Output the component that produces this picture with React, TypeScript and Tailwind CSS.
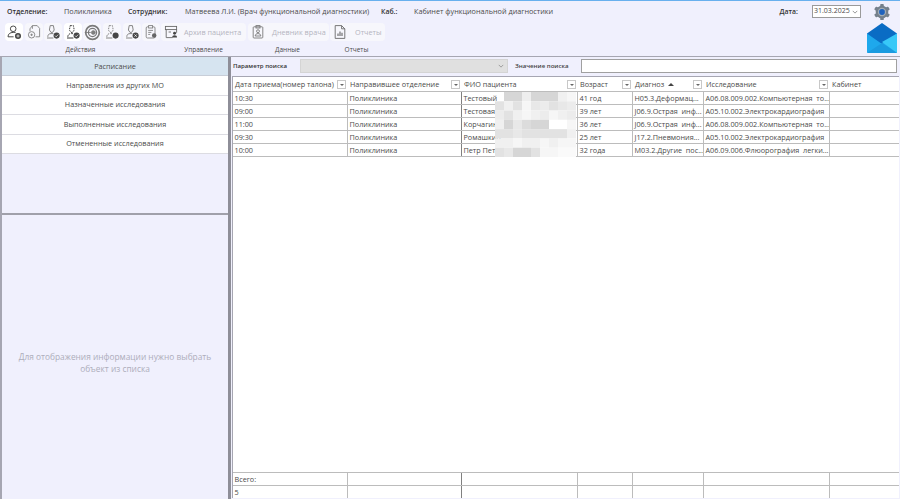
const font = "font-['Open_Sans','Noto_Sans',sans-serif]";

const columns = [
  { title: "Дата приема(номер талона)", width: "w-[115px]", filter: true },
  { title: "Направившее отделение", width: "w-[114px]", filter: true },
  { title: "ФИО пациента", width: "w-[116px]", filter: true },
  { title: "Возраст", width: "w-[55px]", filter: true },
  { title: "Диагноз", width: "w-[71px]", filter: true, sort: true },
  { title: "Исследование", width: "w-[126px]", filter: true },
  { title: "Кабинет", width: "flex-1", filter: false },
];

const rows = [
  ["10:30", "Поликлиника", "Тестовый", "41 год", "H05.3.Деформац...", "A06.08.009.002.Компьютерная  то...", ""],
  ["09:00", "Поликлиника", "Тестовая", "39 лет", "J06.9.Острая  инф...", "A05.10.002.Электрокардиография", ""],
  ["11:00", "Поликлиника", "Корчагин", "36 лет", "J06.9.Острая  инф...", "A06.08.009.002.Компьютерная  то...", ""],
  ["09:30", "Поликлиника", "Ромашкин", "25 лет", "J17.2.Пневмония...", "A05.10.002.Электрокардиография", ""],
  ["10:00", "Поликлиника", "Петр Петр", "32 года", "M03.2.Другие  пос...", "A06.09.006.Флюорография  легки...", ""],
];

const tabs = ["Направления из других МО", "Назначенные исследования", "Выполненные исследования", "Отмененные исследования"];

// мозаика поверх ФИО
const mosaic = [
  [0, 214, 214, 238, 214, 214, 214, 240, 246],
  [226, 240, 226, 246, 232, 236, 226, 232, 236],
  [236, 226, 240, 246, 240, 236, 246, 240, 236],
  [240, 214, 232, 220, 214, 214, 255, 255, 246],
  [226, 226, 232, 226, 226, 226, 226, 226, 240],
  [240, 240, 246, 240, 240, 246, 240, 246, 246],
  [226, 232, 214, 214, 226, 246, 246, 250, 250],
];

const Badge = ({ cx = 15, cy = 15, kind = "dot" }: { cx?: number; cy?: number; kind?: string }) => (
  <g stroke="none">
    <circle cx={cx} cy={cy} r="3.8" fill="#454545" />
    {kind === "check" && <path d={`M${cx - 2} ${cy}l1.5 1.5 2.5-2.8`} stroke="#fff" strokeWidth="0.9" fill="none" />}
    {kind === "plus" && <path d={`M${cx - 2} ${cy}h4M${cx} ${cy - 2}v4`} stroke="#fff" strokeWidth="0.9" />}
    {kind === "x" && <path d={`M${cx - 1.5} ${cy - 1.5}l3 3m0-3l-3 3`} stroke="#fff" strokeWidth="0.9" />}
  </g>
);

const Scope = ({ kind, dashed, dark }: { kind: string; dashed?: boolean; dark?: boolean }) => (
  <svg viewBox="0 0 20 20" className="w-[16px] h-[16px]" fill="none" stroke={dark ? "#333" : "#808080"} strokeWidth="1.2">
    <path d="M6.500 2h4l1 5.500-2 3H7.500L5.500 7.500z" strokeDasharray={dashed ? "2 1.3" : undefined} />
    <path d="M3.500 16c0-2.500 1.500-4 4-4h3" strokeDasharray={dashed ? "2 1.3" : undefined} />
    <path d="M2.500 17.500h8" />
    <Badge kind={kind} cx={14.5} cy={14.5} />
  </svg>
);

const ToolButton = ({ active, children }: { active?: boolean; children: React.ReactNode }) => (
  <div className={`w-[18px] h-[18px] rounded-[4px] flex items-center justify-center ${active ? "bg-white" : "bg-[#f7f7fc]"}`}>
    {children}
  </div>
);

const FilterButton = () => (
  <span className="ml-auto mr-[2px] w-[9px] h-[9px] shrink-0 border border-[#c8c8c8] bg-white flex items-center justify-center">
    <span className="w-0 h-0 border-l-[2px] border-r-[2px] border-t-[2px] border-l-transparent border-r-transparent border-t-[#666]" />
  </span>
);

export default function App() {
  return (
    <div className={`${font} w-[900px] h-[499px] overflow-hidden bg-[#f0f0fd] text-[#4a4a4a] text-[7.25px] flex flex-col border-t-[1px] border-[#68b0ee] relative`}>
      {/* верхняя строка */}
      <div className="h-[21px] shrink-0 flex items-center">
        <span className="ml-[7px] w-[57px] pt-[1px] font-semibold text-[6.9px] text-[#333]">Отделение:</span>
        <span className="w-[64px]">Поликлиника</span>
        <span className="w-[57px] pt-[1px] font-semibold text-[6.9px] text-[#333]">Сотрудник:</span>
        <span className="w-[196px]">Матвеева Л.И. (Врач функциональной диагностики)</span>
        <span className="w-[33px] pt-[1px] font-semibold text-[6.9px] text-[#333]">Каб.:</span>
        <span>Кабинет функциональной диагностики</span>
        <span className="ml-auto pt-[1px] font-semibold text-[6.9px] text-[#333]">Дата:</span>
        <div className="ml-[14px] w-[49px] h-[13px] bg-white border border-[#9a9a9a] flex items-center pl-[1px] text-[7px]">
          31.03.2025
          <svg viewBox="0 0 8 8" className="ml-auto mr-[2px] w-[6px] h-[6px]" fill="none" stroke="#777" strokeWidth="1">
            <path d="M1 2.5l3 3 3-3" />
          </svg>
        </div>
        <svg viewBox="0 0 20 20" className="ml-[12px] mr-[9px] w-[18px] h-[18px]">
          <g fill="#75808c">
            <circle cx="10" cy="10" r="7" />
            <rect x="8" y="1" width="4" height="18" rx="1" />
            <rect x="8" y="1" width="4" height="18" rx="1" transform="rotate(60 10 10)" />
            <rect x="8" y="1" width="4" height="18" rx="1" transform="rotate(120 10 10)" />
          </g>
          <circle cx="10" cy="10" r="4.600" fill="#a4adb6" />
          <circle cx="10" cy="10" r="3.200" fill="#1f62bd" />
        </svg>
      </div>

      {/* панель инструментов */}
      <div className="h-[20px] shrink-0 flex items-center relative">
        <div className="ml-[5px] w-[156px] flex gap-[1.600px]">
          <ToolButton active>
            <svg viewBox="0 0 20 20" className="w-[16px] h-[16px]" fill="none" stroke="#444" strokeWidth="1.200">
              <circle cx="9" cy="6" r="3.500" />
              <path d="M2.500 16c0-3.500 2.500-5.500 6.500-5.500h3" />
              <path d="M2.500 16h7" />
              <Badge kind="plus" cx={15} cy={15} />
            </svg>
          </ToolButton>
          <ToolButton>
            <svg viewBox="0 0 20 20" className="w-[16px] h-[16px]" fill="none" stroke="#808080" strokeWidth="1.100">
              <path d="M8 2h6l3 3.500V16h-5M8 2v4M8 2L5 6v3" />
              <circle cx="7" cy="13.500" r="4" />
              <path d="M5.500 13.500h3M7 12v3" />
            </svg>
          </ToolButton>
          <ToolButton><Scope kind="check" /></ToolButton>
          <ToolButton active><Scope kind="check" dashed dark /></ToolButton>
          <ToolButton>
            <svg viewBox="0 0 20 20" className="w-[17px] h-[17px]" fill="none" stroke="#7a7a7a">
              <circle cx="10" cy="10" r="8" strokeWidth="2" />
              <circle cx="10" cy="10" r="4.800" strokeWidth="1.500" />
              <circle cx="11" cy="10" r="2.200" fill="#808080" />
              <path d="M1 10h7" strokeWidth="1" />
            </svg>
          </ToolButton>
          <ToolButton><Scope kind="dot" dashed /></ToolButton>
          <ToolButton><Scope kind="x" /></ToolButton>
          <ToolButton>
            <svg viewBox="0 0 20 20" className="w-[16px] h-[16px]" fill="none" stroke="#808080" strokeWidth="1.100">
              <rect x="4" y="3.500" width="11" height="14" rx="1.500" />
              <rect x="7" y="2" width="5" height="3" fill="#f7f7fc" />
              <path d="M6.500 8h6M6.500 10.500h4M6.500 13h2.500" />
              <circle cx="14" cy="14.500" r="2.800" fill="#666" stroke="none" />
            </svg>
          </ToolButton>
        </div>
        <div className="w-[85px] h-[18px] rounded-[4px] bg-[#f7f7fc] flex items-center">
          <svg viewBox="0 0 20 20" className="ml-[2px] w-[16px] h-[16px]" fill="none" stroke="#666" strokeWidth="1.100">
            <rect x="3" y="3" width="14" height="4" />
            <path d="M4 7v10h8M17 7v4M7 10h3" />
            <circle cx="14.500" cy="11.500" r="1.800" fill="#444" stroke="none" />
            <path d="M11.500 17c0-2 1-3 3-3s3 1 3 3z" fill="#444" stroke="none" />
          </svg>
          <span className="ml-[5px] text-[#b4b4be]">Архив пациента</span>
        </div>
        <div className="ml-[2px] w-[81px] h-[18px] rounded-[4px] bg-[#f7f7fc] flex items-center">
          <svg viewBox="0 0 20 20" className="ml-[2px] w-[16px] h-[16px]" fill="none" stroke="#777" strokeWidth="1.100">
            <rect x="4" y="3.500" width="12" height="14" rx="1" />
            <rect x="7.500" y="2" width="5" height="3" />
            <circle cx="10" cy="9" r="1.800" />
            <path d="M6.500 15c0-2 1.500-3 3.500-3s3.500 1 3.500 3z" />
          </svg>
          <span className="ml-[6px] text-[#b4b4be]">Дневник врача</span>
        </div>
        <div className="ml-[1px] w-[55px] h-[18px] rounded-[4px] bg-[#f7f7fc] flex items-center">
          <svg viewBox="0 0 20 20" className="ml-[2px] w-[16px] h-[16px]" fill="none" stroke="#666" strokeWidth="1.100">
            <path d="M4 2h8l4 4v12H4zM12 2v4h4" />
            <path d="M7.500 15v-3M10 15V9.500M12.500 15v-4" strokeWidth="1.400" />
          </svg>
          <span className="ml-[7px] text-[#b4b4be]">Отчеты</span>
        </div>
        <svg viewBox="0 0 30 30" className="w-[30px] h-[30px] absolute right-[3px] top-[1px]">
          <path d="M15 0l15 10.500v6L15 21 0 16.500v-6z" fill="#0a6cc4" />
          <path d="M0 10.500L15 21l15-10.500V29a1 1 0 0 1-1 1H1a1 1 0 0 1-1-1z" fill="#1ea8ec" />
          <path d="M30 10.500V30L15 19z" fill="#38c8f8" />
          <path d="M0 30l15-10 15 10z" fill="#1a9ae0" />
        </svg>
      </div>

      {/* подписи групп */}
      <div className="h-[14px] pt-[2px] shrink-0 flex items-center text-center text-[6.5px]">
        <span className="w-[161px]">Действия</span>
        <span className="w-[85px]">Управление</span>
        <span className="w-[83px]">Данные</span>
        <span className="w-[55px]">Отчеты</span>
      </div>

      {/* основная часть */}
      <div className="flex-1 min-h-0 flex border-t-[1.500px] border-[#a6a6b2] bg-[#f0f0fd]">
        <div className="w-[228px] shrink-0 flex flex-col border-l-[2px] border-[#a6a6b2]">
          <div className="h-[156px] shrink-0 flex flex-col">
            <div className="h-[19px] shrink-0 flex items-center justify-center bg-[#d6e4f0] border-b border-[#c8ced8]">
              Расписание
            </div>
            {tabs.map((t) => (
              <div key={t} className="h-[19.500px] shrink-0 flex items-center justify-center bg-white border-b-[1.500px] border-[#dcdce2]">
                {t}
              </div>
            ))}
          </div>
          <div className="flex-1 border-t-[2px] border-[#a0a0aa] flex items-center justify-center text-center text-[8.350px] leading-[12px] text-[#adadbb] px-[12px] pt-[12px]">
            Для отображения информации нужно выбрать объект из списка
          </div>
        </div>

        <div className="w-[3px] shrink-0 bg-[#8e8e98]" />

        <div className="flex-1 min-w-0 flex flex-col">
          <div className="h-[19px] pb-[1px] shrink-0 flex items-center">
            <span className="ml-[2px] w-[67px] font-semibold text-[6.100px] text-[#333]">Параметр поиска</span>
            <div className="w-[208px] h-[13.500px] bg-[#e0e0e0] border border-[#d4d4d4] flex items-center">
              <svg viewBox="0 0 8 8" className="ml-auto mr-[3px] w-[6px] h-[6px]" fill="none" stroke="#888" strokeWidth="1">
                <path d="M1 2.500l3 3 3-3" />
              </svg>
            </div>
            <span className="ml-[7px] w-[66px] font-semibold text-[6.100px] text-[#444]">Значение поиска</span>
            <div className="w-[316px] h-[13.500px] bg-white border border-[#a0a0a0]" />
          </div>

          <div className="flex-1 min-h-0 ml-[1px] mb-[1px] mr-[1px] bg-white border-t-[1.500px] border-l-[1px] border-[#a6a6b2] flex flex-col relative">
            <div className="h-[14px] pt-[1px] shrink-0 flex">
              {columns.map((c) => (
                <div key={c.title} className={`${c.width} shrink-0 flex items-center pl-[2px]`}>
                  <span className="whitespace-nowrap">{c.title}</span>
                  {c.sort && (
                    <span className="ml-[4px] w-0 h-0 border-l-[3px] border-r-[3px] border-b-[3px] border-l-transparent border-r-transparent border-b-[#444]" />
                  )}
                  {c.filter && <FilterButton />}
                </div>
              ))}
            </div>

            {rows.map((r, i) => (
              <div key={i} className="h-[13px] shrink-0 flex border-t border-[#bcbcbc]">
                {r.map((v, j) => (
                  <div
                    key={j}
                    className={`${columns[j].width} shrink-0 pl-[1.500px] pt-[1px] flex items-center whitespace-pre overflow-hidden border-r ${j === 1 ? "border-[#808080]" : "border-[#bcbcbc]"} last:border-r-0`}
                  >
                    {v}
                  </div>
                ))}
              </div>
            ))}
            <div className="border-t border-[#bcbcbc]" />

            <div className="mt-auto shrink-0">
              <div className="h-[13px] flex border-t border-[#bcbcbc]">
                {columns.map((c, j) => (
                  <div key={c.title} className={`${c.width} shrink-0 pl-[1.500px] flex items-center border-r ${j === 1 ? "border-[#808080]" : "border-[#bcbcbc]"} last:border-r-0`}>
                    {j === 0 ? "Всего:" : ""}
                  </div>
                ))}
              </div>
              <div className="h-[13px] flex border-t border-[#bcbcbc]">
                {columns.map((c, j) => (
                  <div key={c.title} className={`${c.width} shrink-0 pl-[1.500px] flex items-center border-r ${j === 1 ? "border-[#808080]" : "border-[#bcbcbc]"} last:border-r-0`}>
                    {j === 0 ? "5" : ""}
                  </div>
                ))}
              </div>
            </div>

            <svg viewBox="0 0 90 70" className="absolute left-[262px] top-[15px] w-[81px] h-[65px]" preserveAspectRatio="none">
              {mosaic.map((line, y) =>
                line.map((g, x) =>
                  g === 0 ? null : <rect key={`${x}-${y}`} x={x * 10} y={y * 10} width="10" height="10" fill={`rgb(${g},${g},${g})`} />
                )
              )}
            </svg>
          </div>
        </div>
      </div>
    </div>
  );
}
